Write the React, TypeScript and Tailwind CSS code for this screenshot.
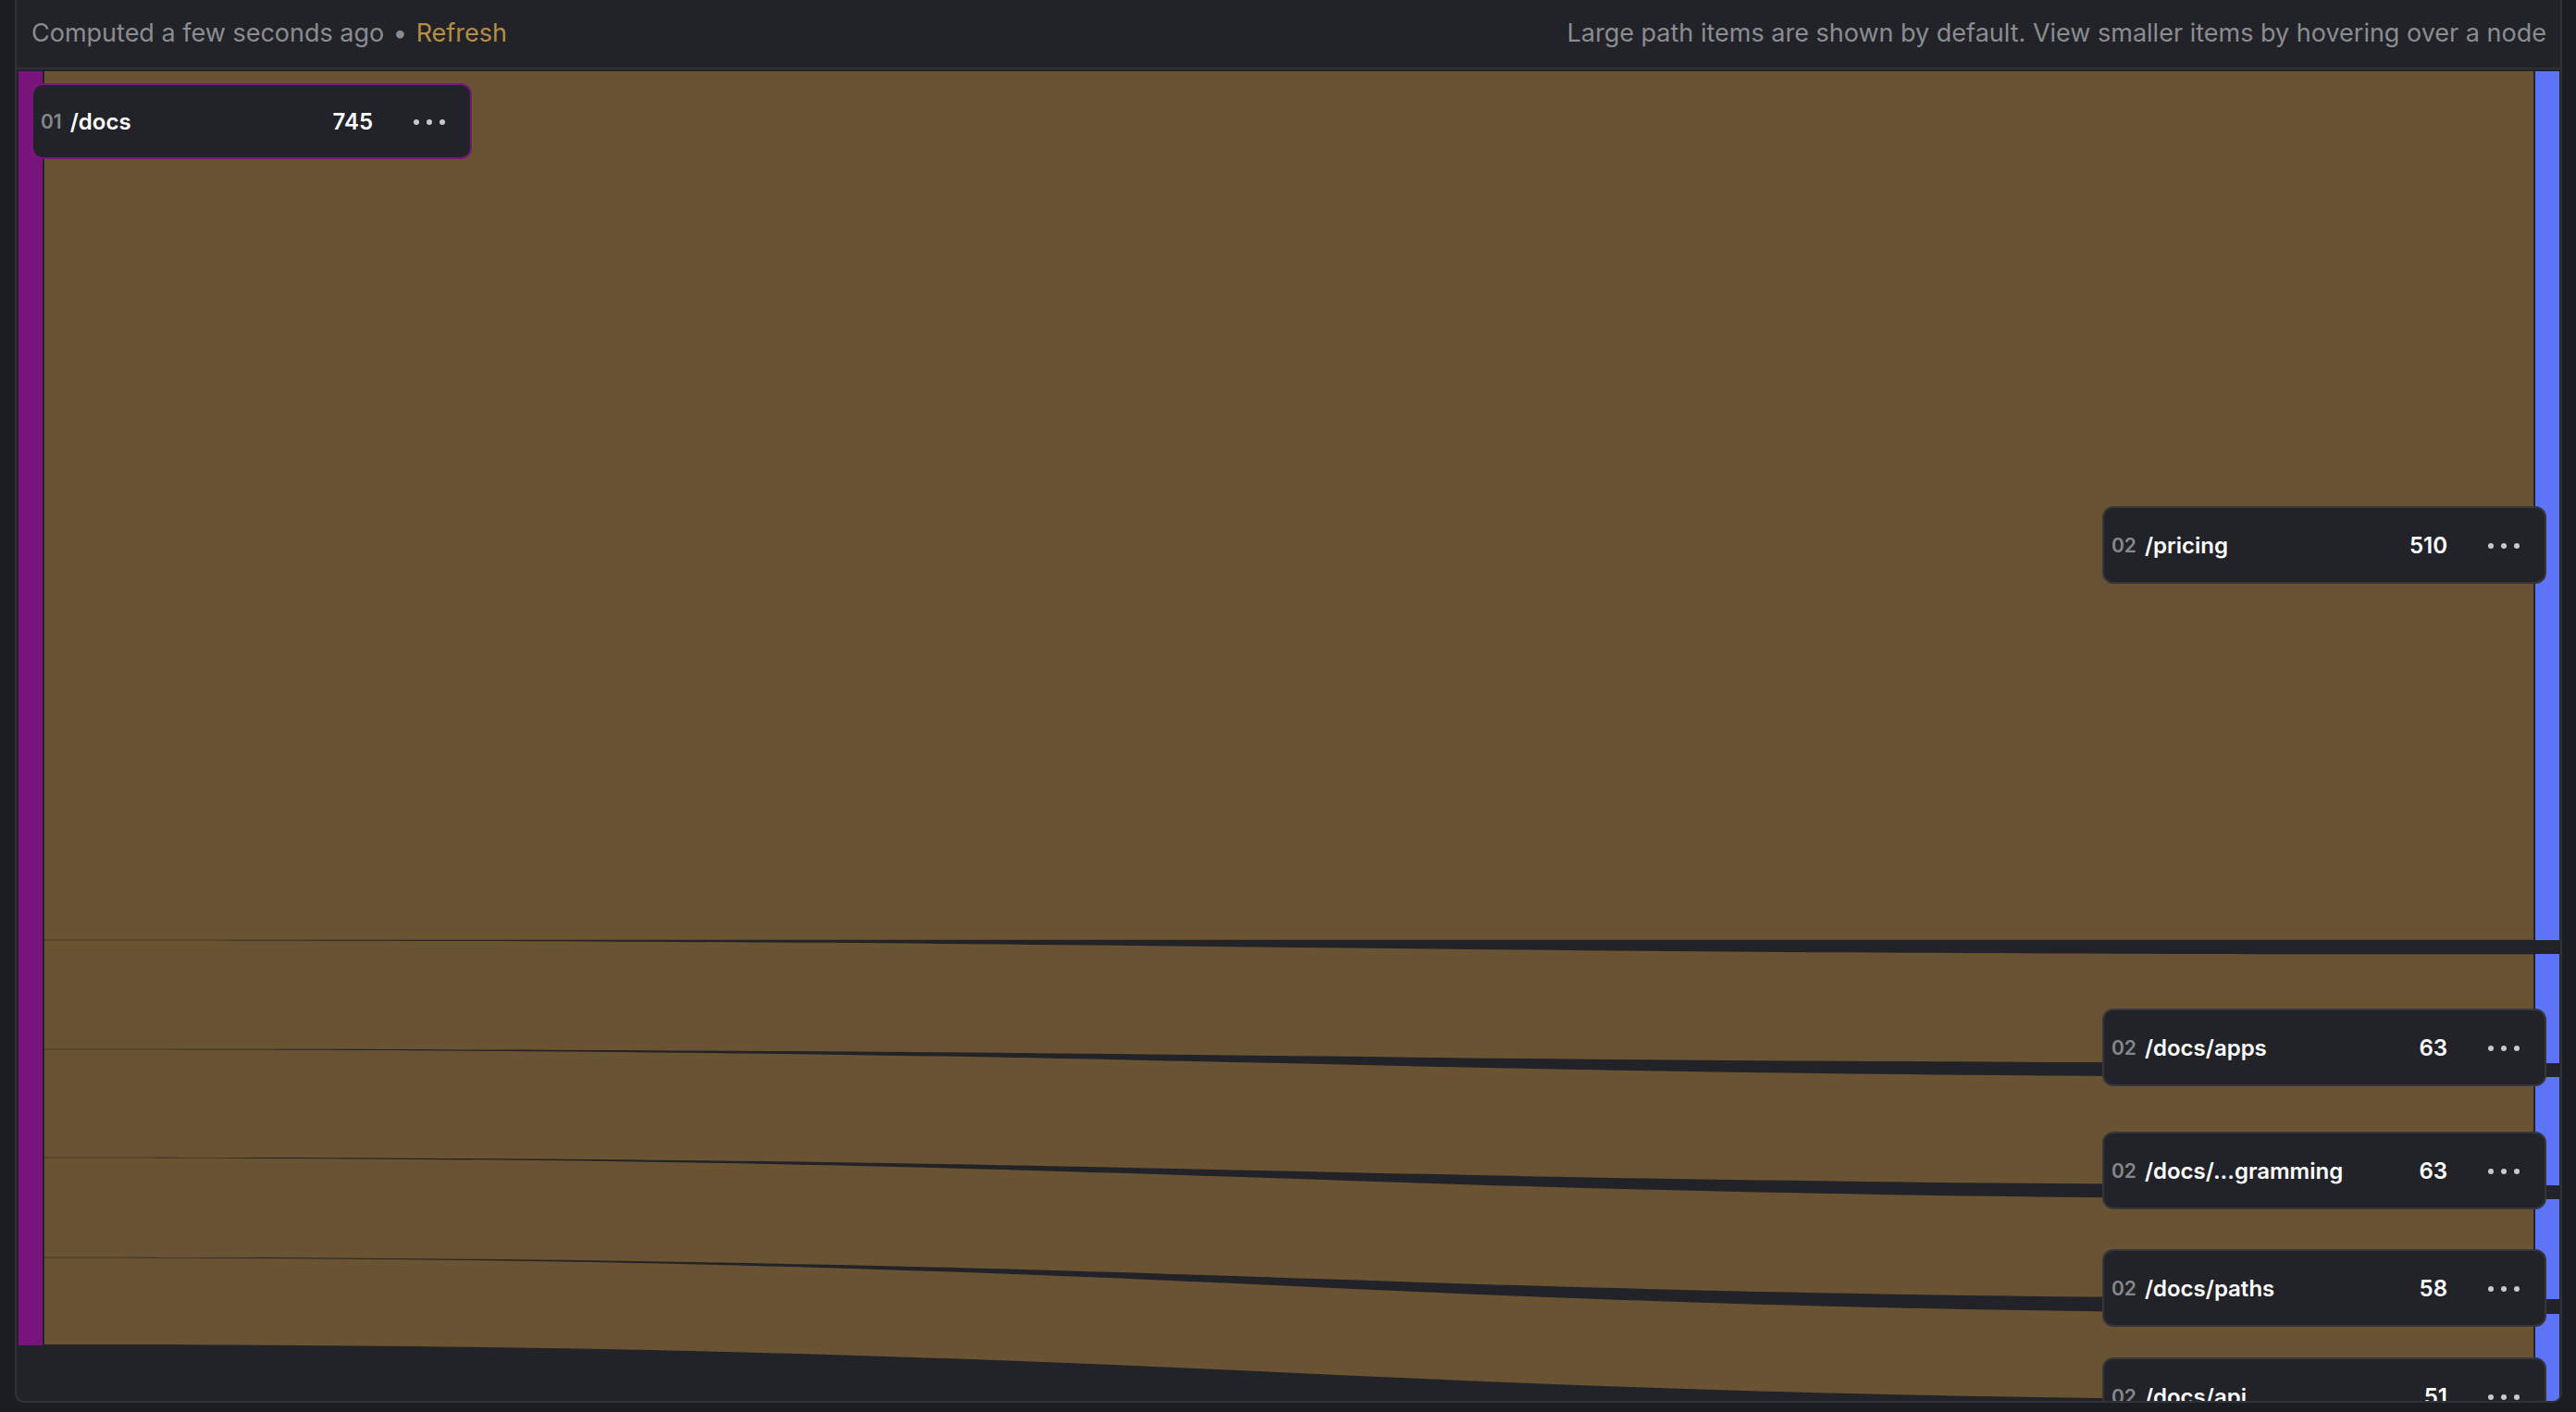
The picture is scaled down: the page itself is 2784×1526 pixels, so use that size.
import React from 'react';

// chart-local coordinates (inside the panel, below the header)
const rightNodes = [
  { label: '/pricing', value: 510, y0: 2, y1: 941 },
  { label: '/docs/apps', value: 63, y0: 956, y1: 1074 },
  { label: '/docs/...gramming', value: 63, y0: 1089, y1: 1206 },
  { label: '/docs/paths', value: 58, y0: 1221, y1: 1329 },
  { label: '/docs/api', value: 51, y0: 1345, y1: 1439 },
];

const X0 = 30;
const X1 = 2720;
const XM = (X0 + X1) / 2;
const INSET = 0.3;

const links = (() => {
  let y = 2;
  return rightNodes.map((n, i) => {
    const h = n.y1 - n.y0;
    const l0 = y + (i === 0 ? 0 : INSET);
    const l1 = y + h - (i === rightNodes.length - 1 ? 0 : INSET);
    const r0 = n.y0 + (i === 0 ? 0 : INSET);
    const r1 = n.y1 - (i === rightNodes.length - 1 ? 0 : INSET);
    y += h;
    return `M${X0} ${l0} C${XM} ${l0}, ${XM} ${r0}, ${X1} ${r0} L${X1} ${r1} C${XM} ${r1}, ${XM} ${l1}, ${X0} ${l1} Z`;
  });
})();

const Dots = () => (
  <div className="ml-[44px] flex items-center gap-[8px]">
    <span className="h-[6px] w-[6px] rounded-full bg-[#c8c9cc]" />
    <span className="h-[6px] w-[6px] rounded-full bg-[#c8c9cc]" />
    <span className="h-[6px] w-[6px] rounded-full bg-[#c8c9cc]" />
  </div>
);

const NodeBox = ({ step, label, value }: { step: string; label: string; value: number }) => (
  <div className="flex h-full items-center pl-[8px] pr-[27px] pt-[2px]">
    <span className="mr-[9px] text-[21px] font-semibold text-[#86878c]">{step}</span>
    <span className="flex-1 truncate text-[24px] font-semibold text-white">{label}</span>
    <span className="text-[24px] font-semibold text-white">{value}</span>
    <Dots />
  </div>
);

export default function App() {
  return (
    <div className="min-h-screen bg-[#1b1d23] pl-[16px] pr-[15px] font-['Inter','Noto_Sans',sans-serif]">
      <div className="overflow-hidden rounded-b-[10px] border-x-2 border-b-2 border-[#303238] bg-[#222328]">
        <div className="flex h-[75px] items-center justify-between border-b-2 border-[#2e3035] pl-[16px] pr-[15px] text-[27px] text-[#8b8c91]">
          <div>
            Computed a few seconds ago <span className="mx-[2px]">•</span>{' '}
            <span className="text-[#b68d46]">Refresh</span>
          </div>
          <div>Large path items are shown by default. View smaller items by hovering over a node</div>
        </div>

        <div className="relative h-[1439px]">
          <svg className="absolute inset-0 h-full w-full" viewBox="0 0 2749 1439" preserveAspectRatio="none">
            {links.map((d, i) => (
              <path key={i} d={d} fill="#6a5332" />
            ))}
            <rect x={2} y={2} width={26} height={1377} fill="#79147d" />
            {rightNodes.map((n) => (
              <rect key={n.label} x={2722} y={n.y0} width={26} height={n.y1 - n.y0} fill="#5c74f5" />
            ))}
          </svg>

          <div className="absolute left-[16px] top-[15px] h-[82px] w-[476px] rounded-[12px] border-2 border-[#7a157e] bg-[#222328]">
            <NodeBox step="01" label="/docs" value={745} />
          </div>

          {rightNodes.map((n) => (
            <div
              key={n.label}
              className="absolute left-[2254px] h-[84px] w-[480px] rounded-[12px] border-2 border-[#35373c] bg-[#222328]"
              style={{ top: Math.round((n.y0 + n.y1) / 2) }}
            >
              <NodeBox step="02" label={n.label} value={n.value} />
            </div>
          ))}
        </div>
      </div>
    </div>
  );
}
